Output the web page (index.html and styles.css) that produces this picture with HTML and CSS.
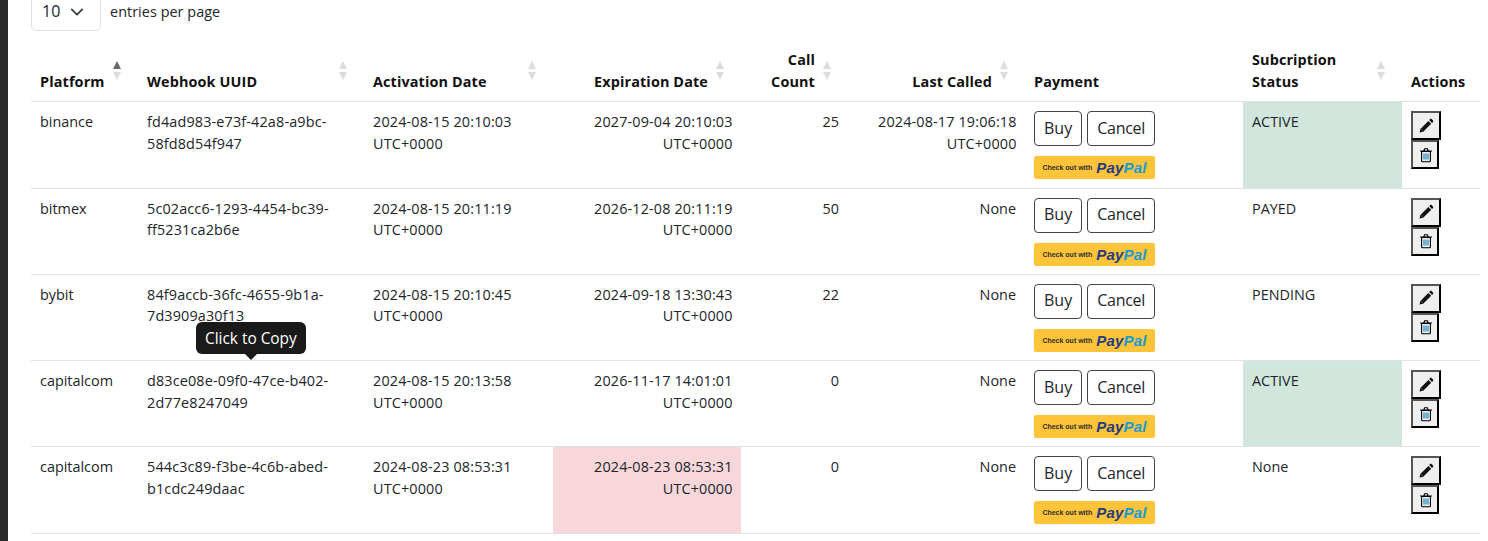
FILE: index.html
```html
<!DOCTYPE html>
<html lang="en">
<head>
  <meta charset="UTF-8" />
  <title>Webhooks</title>
  <link rel="stylesheet" href="styles.css">
</head>
<body>
  <!-- icons used by the action buttons -->
  <svg class="sprites">
    <symbol id="i-edit" viewBox="0 0 16 16">
      <path d="M1.500 14.500l.9-3.600 8-8 2.800 2.800-8 8z" fill="#111"/>
      <path d="M3 11.300l1.700 1.700" stroke="#777" stroke-width=".7"/>
      <path d="M11.200 2.100l1-1c.4-.4 1-.4 1.400 0l1.400 1.400c.4.4.4 1 0 1.400l-1 1z" fill="#111"/>
    </symbol>
    <symbol id="i-trash" viewBox="0 0 16 16">
      <path d="M3.600 4.500h8.800v9.300a1 1 0 0 1-1 1H4.600a1 1 0 0 1-1-1z" fill="none" stroke="#000" stroke-width="1.100"/>
      <path d="M2 4h12M5.800 4l.8-2.300h2.800l.8 2.300" fill="none" stroke="#000" stroke-width="1.100"/>
      <path d="M6 6.500v6M8 6.500v6M10 6.500v6" stroke="#0f7fc0" stroke-width="1.100"/>
    </symbol>
  </svg>

  <div class="sidebar"></div>
  <main class="content">
    <!-- page size -->
    <div class="page-size">
      <div class="select-box"><span>10</span>
        <svg class="chevron" viewBox="0 0 16 16"><path d="M2 5l6 6 6-6" fill="none" stroke="#343a40" stroke-width="2" stroke-linecap="round" stroke-linejoin="round"/></svg>
      </div>
      <span>entries per page</span>
    </div>

    <table class="hooks">
      <colgroup>
        <col class="c-platform"><col class="c-uuid"><col class="c-act"><col class="c-exp"><col class="c-count"><col class="c-last"><col class="c-pay"><col class="c-status"><col class="c-actions">
      </colgroup>
      <thead>
        <tr>
          <th class="sort sorted">Platform</th>
          <th class="sort">Webhook UUID</th>
          <th class="sort">Activation Date</th>
          <th class="sort num">Expiration Date</th>
          <th class="sort num">Call<br>Count</th>
          <th class="sort num">Last Called</th>
          <th>Payment</th>
          <th class="sort">Subcription<br>Status</th>
          <th>Actions</th>
        </tr>
      </thead>
      <tbody>
        <tr>
          <td>binance</td>
          <td class="stamp">fd4ad983-e73f-42a8-a9bc-<br>58fd8d54f947</td>
          <td class="stamp">2024-08-15 20:10:03<br>UTC+0000</td>
          <td class="stamp num">2027-09-04 20:10:03<br>UTC+0000</td>
          <td class="num">25</td>
          <td class="stamp num">2024-08-17 19:06:18<br>UTC+0000</td>
          <td><div class="pay-btns"><button class="btn">Buy</button><button class="btn btn-cancel">Cancel</button></div><div class="paypal"><span class="pp-label">Check out with</span><span class="pp-logo">Pay<i>Pal</i></span></div></td>
          <td class="active">ACTIVE</td>
          <td class="acts"><button class="act act-edit"><svg><use href="#i-edit"/></svg></button><button class="act act-del"><svg><use href="#i-trash"/></svg></button></td>
        </tr>
        <tr>
          <td>bitmex</td>
          <td class="stamp">5c02acc6-1293-4454-bc39-<br>ff5231ca2b6e</td>
          <td class="stamp">2024-08-15 20:11:19<br>UTC+0000</td>
          <td class="stamp num">2026-12-08 20:11:19<br>UTC+0000</td>
          <td class="num">50</td>
          <td class="num">None</td>
          <td><div class="pay-btns"><button class="btn">Buy</button><button class="btn btn-cancel">Cancel</button></div><div class="paypal"><span class="pp-label">Check out with</span><span class="pp-logo">Pay<i>Pal</i></span></div></td>
          <td>PAYED</td>
          <td class="acts"><button class="act act-edit"><svg><use href="#i-edit"/></svg></button><button class="act act-del"><svg><use href="#i-trash"/></svg></button></td>
        </tr>
        <tr>
          <td>bybit</td>
          <td class="stamp has-tip">84f9accb-36fc-4655-9b1a-<br>7d3909a30f13<div class="tooltip">Click to Copy</div></td>
          <td class="stamp">2024-08-15 20:10:45<br>UTC+0000</td>
          <td class="stamp num">2024-09-18 13:30:43<br>UTC+0000</td>
          <td class="num">22</td>
          <td class="num">None</td>
          <td><div class="pay-btns"><button class="btn">Buy</button><button class="btn btn-cancel">Cancel</button></div><div class="paypal"><span class="pp-label">Check out with</span><span class="pp-logo">Pay<i>Pal</i></span></div></td>
          <td>PENDING</td>
          <td class="acts"><button class="act act-edit"><svg><use href="#i-edit"/></svg></button><button class="act act-del"><svg><use href="#i-trash"/></svg></button></td>
        </tr>
        <tr>
          <td>capitalcom</td>
          <td class="stamp">d83ce08e-09f0-47ce-b402-<br>2d77e8247049</td>
          <td class="stamp">2024-08-15 20:13:58<br>UTC+0000</td>
          <td class="stamp num">2026-11-17 14:01:01<br>UTC+0000</td>
          <td class="num">0</td>
          <td class="num">None</td>
          <td><div class="pay-btns"><button class="btn">Buy</button><button class="btn btn-cancel">Cancel</button></div><div class="paypal"><span class="pp-label">Check out with</span><span class="pp-logo">Pay<i>Pal</i></span></div></td>
          <td class="active">ACTIVE</td>
          <td class="acts"><button class="act act-edit"><svg><use href="#i-edit"/></svg></button><button class="act act-del"><svg><use href="#i-trash"/></svg></button></td>
        </tr>
        <tr>
          <td>capitalcom</td>
          <td class="stamp">544c3c89-f3be-4c6b-abed-<br>b1cdc249daac</td>
          <td class="stamp">2024-08-23 08:53:31<br>UTC+0000</td>
          <td class="stamp num expired">2024-08-23 08:53:31<br>UTC+0000</td>
          <td class="num">0</td>
          <td class="num">None</td>
          <td><div class="pay-btns"><button class="btn">Buy</button><button class="btn btn-cancel">Cancel</button></div><div class="paypal"><span class="pp-label">Check out with</span><span class="pp-logo">Pay<i>Pal</i></span></div></td>
          <td>None</td>
          <td class="acts"><button class="act act-edit"><svg><use href="#i-edit"/></svg></button><button class="act act-del"><svg><use href="#i-trash"/></svg></button></td>
        </tr>
      </tbody>
    </table>
  </main>
</body>
</html>
```
FILE: styles.css
```css
* {
  box-sizing: border-box;
}
html, body {
  height: 100%;
}
body {
  margin: 0;
  display: flex;
  overflow: hidden;
  background-color: #fff;
  color: #212529;
  font-family: "Open Sans", sans-serif;
  font-size: 14.4px;
  line-height: 21.6px;
}
.sprites {
  display: none;
}
.sidebar {
  width: 8px;
  flex: none;
  background-color: #2b2b2b;
}
.content {
  flex: 1;
  min-width: 0;
  padding: 0 8px 0 23px;
  margin-top: -7px;
}

/* page size */
.page-size {
  display: flex;
  align-items: center;
  gap: 9px;
  height: 38px;
  margin-bottom: 10px;
  letter-spacing: .05px;
}
.select-box {
  width: 70px;
  height: 38px;
  display: flex;
  align-items: center;
  justify-content: space-between;
  padding: 0 16px 0 10px;
  border: 1px solid #dee2e6;
  border-radius: 5px;
  font-size: 16px;
}
.chevron {
  width: 14px;
  height: 14px;
}

/* table */
.hooks {
  width: 1449px;
  table-layout: fixed;
  border-collapse: collapse;
}
.c-platform { width: 107px; }
.c-uuid { width: 226px; }
.c-act { width: 189px; }
.c-exp { width: 188px; }
.c-count { width: 107px; }
.c-last { width: 177px; }
.c-pay { width: 218px; }
.c-status { width: 159px; }
.c-actions { width: 78px; }

.hooks th {
  position: relative;
  padding: 8px 9px 9.2px;
  text-align: left;
  vertical-align: bottom;
  font-weight: 700;
  letter-spacing: .13px;
  color: #111;
  border-bottom: 1px solid #dee2e6;
}
.hooks th.sort {
  padding-right: 33px;
}
.hooks th.num,
.hooks td.num {
  text-align: right;
}
.hooks td {
  padding: 9px 9px 8.25px;
  vertical-align: top;
  border-bottom: 1px solid #dee2e6;
}
/* digits run a bit wider here */
.hooks td.stamp {
  letter-spacing: .15px;
}
.hooks td.stamp.num {
  padding-right: 8.4px;
}

/* sort arrows */
.sort::before,
.sort::after {
  content: "";
  position: absolute;
  right: 17px;
  border-left: 4px solid transparent;
  border-right: 4px solid transparent;
}
.sort::before {
  bottom: 32px;
  border-bottom: 8px solid #dcdcdc;
}
.sort::after {
  bottom: 21px;
  border-top: 8px solid #dcdcdc;
}
.sorted::before {
  border-bottom-color: #6a6a6a;
}

/* status colours */
.hooks td.active {
  background-color: #d1e7dd;
}
.hooks td.expired {
  background-color: #f8d7da;
}

/* payment */
.pay-btns {
  display: flex;
  gap: 5px;
}
.btn {
  height: 35px;
  padding: 0 9px 2px;
  background: #fff;
  color: #212529;
  border: 1px solid #444;
  border-radius: 4px;
  font-family: inherit;
  font-size: 16px;
}
.btn-cancel {
  width: 68px;
  padding: 0 0 2px;
  letter-spacing: -.3px;
}
.paypal {
  width: 121px;
  height: 23px;
  margin-top: 10px;
  display: flex;
  align-items: center;
  justify-content: center;
  gap: 4px;
  background-color: #ffc439;
  border-radius: 2px;
}
.pp-label {
  font-family: "Liberation Sans", sans-serif;
  font-size: 7px;
  font-weight: 700;
  color: #2c2e2f;
  line-height: 1;
}
.pp-logo {
  font-family: "Liberation Sans", sans-serif;
  font-size: 15px;
  font-weight: 700;
  font-style: italic;
  letter-spacing: .2px;
  color: #253b80;
  line-height: 1;
}
.pp-logo i {
  color: #179bd7;
}

/* actions */
.acts {
  line-height: 0;
}
.act {
  display: block;
  height: 29px;
  padding: 0;
  background-color: #efefef;
  border: 2px solid;
  border-color: #555 #000 #000 #555;
}
.act svg {
  width: 16px;
  height: 16px;
  display: block;
  margin: 0 auto;
}
.act-edit {
  width: 30px;
}
.act-del {
  width: 28px;
  padding-left: 2px;
}

/* tooltip */
.has-tip {
  position: relative;
}
.tooltip {
  position: absolute;
  left: 58px;
  top: 47.5px;
  padding: 6px 9px 4px;
  white-space: nowrap;
  background-color: #1a1a1a;
  color: #fff;
  font-size: 15.4px;
  letter-spacing: 0;
  border-radius: 6px;
}
.tooltip::after {
  content: "";
  position: absolute;
  left: 50%;
  bottom: -6px;
  margin-left: -6px;
  border-left: 6px solid transparent;
  border-right: 6px solid transparent;
  border-top: 6px solid #1a1a1a;
}
```
